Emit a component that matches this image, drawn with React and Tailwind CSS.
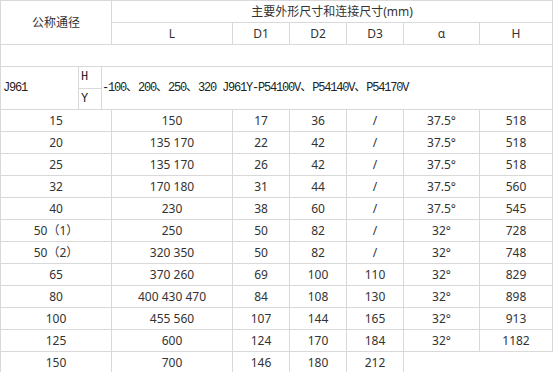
// Valve dimension table — 主要外形尺寸和连接尺寸
const rows = [
  ['15', '150', '17', '36', '/', '37.5°', '518'],
  ['20', '135 170', '22', '42', '/', '37.5°', '518'],
  ['25', '135 170', '26', '42', '/', '37.5°', '518'],
  ['32', '170 180', '31', '44', '/', '37.5°', '560'],
  ['40', '230', '38', '60', '/', '37.5°', '545'],
  ['50（1）', '250', '50', '82', '/', '32°', '728'],
  ['50（2）', '320 350', '50', '82', '/', '32°', '748'],
  ['65', '370 260', '69', '100', '110', '32°', '829'],
  ['80', '400 430 470', '84', '108', '130', '32°', '898'],
  ['100', '455 560', '107', '144', '165', '32°', '913'],
  ['125', '600', '124', '170', '184', '32°', '1182'],
  ['150', '700', '146', '180', '212'],
];

const cell = 'border border-[#d9d9d9] text-center p-0';
const mono = { fontFamily: '"Liberation Mono", "Noto Sans CJK SC", monospace' };

const Sep = () => <span className="text-[12px] tracking-normal">、</span>;

export default function App() {
  return (
    <div
      className="w-[557px] h-[372px] overflow-hidden bg-white text-[#333] text-[12px]"
      style={{ fontFamily: '"Noto Sans", "Noto Sans CJK SC", sans-serif' }}
    >
      <table className="table-fixed border-collapse w-[552px]">
        <colgroup>
          <col className="w-[111px]" />
          <col className="w-[121px]" />
          <col className="w-[57px]" />
          <col className="w-[57px]" />
          <col className="w-[57px]" />
          <col className="w-[76px]" />
          <col className="w-[73px]" />
        </colgroup>
        <tbody>
          <tr className="h-[22px]">
            <td rowSpan={2} className={cell}>公称通径</td>
            <td colSpan={6} className={cell}>主要外形尺寸和连接尺寸(mm)</td>
          </tr>
          <tr className="h-[22px]">
            <td className={cell}>L</td>
            <td className={cell}>D1</td>
            <td className={cell}>D2</td>
            <td className={cell}>D3</td>
            <td className={cell}>α</td>
            <td className={cell}>H</td>
          </tr>
          <tr className="h-[22px]">
            <td colSpan={7} className={cell}></td>
          </tr>
          <tr className="h-[43px]">
            <td colSpan={7} className={cell + ' text-left'}>
              <div className="flex h-[42px] items-stretch text-[12px] tracking-[-1.2px] text-[#222]" style={mono}>
                <div className="w-[78px] flex items-center pl-[2px] border-r border-[#d9d9d9]">J961</div>
                <div className="w-[23px] flex flex-col border-r border-[#d9d9d9]">
                  <div className="flex-1 flex items-center pl-[2px] border-b border-[#d9d9d9]">H</div>
                  <div className="flex-1 flex items-center pl-[2px]">Y</div>
                </div>
                <div className="flex-1 flex items-center whitespace-nowrap">
                  -100<Sep />200<Sep />250<Sep />320 J961Y-P54100V<Sep />P54140V<Sep />P54170V
                </div>
              </div>
            </td>
          </tr>
          {rows.map((r, i) => (
            <tr key={i} className="h-[22px]">
              {r.map((v, j) => (
                <td key={j} className={cell}>{v}</td>
              ))}
            </tr>
          ))}
        </tbody>
      </table>
    </div>
  );
}
